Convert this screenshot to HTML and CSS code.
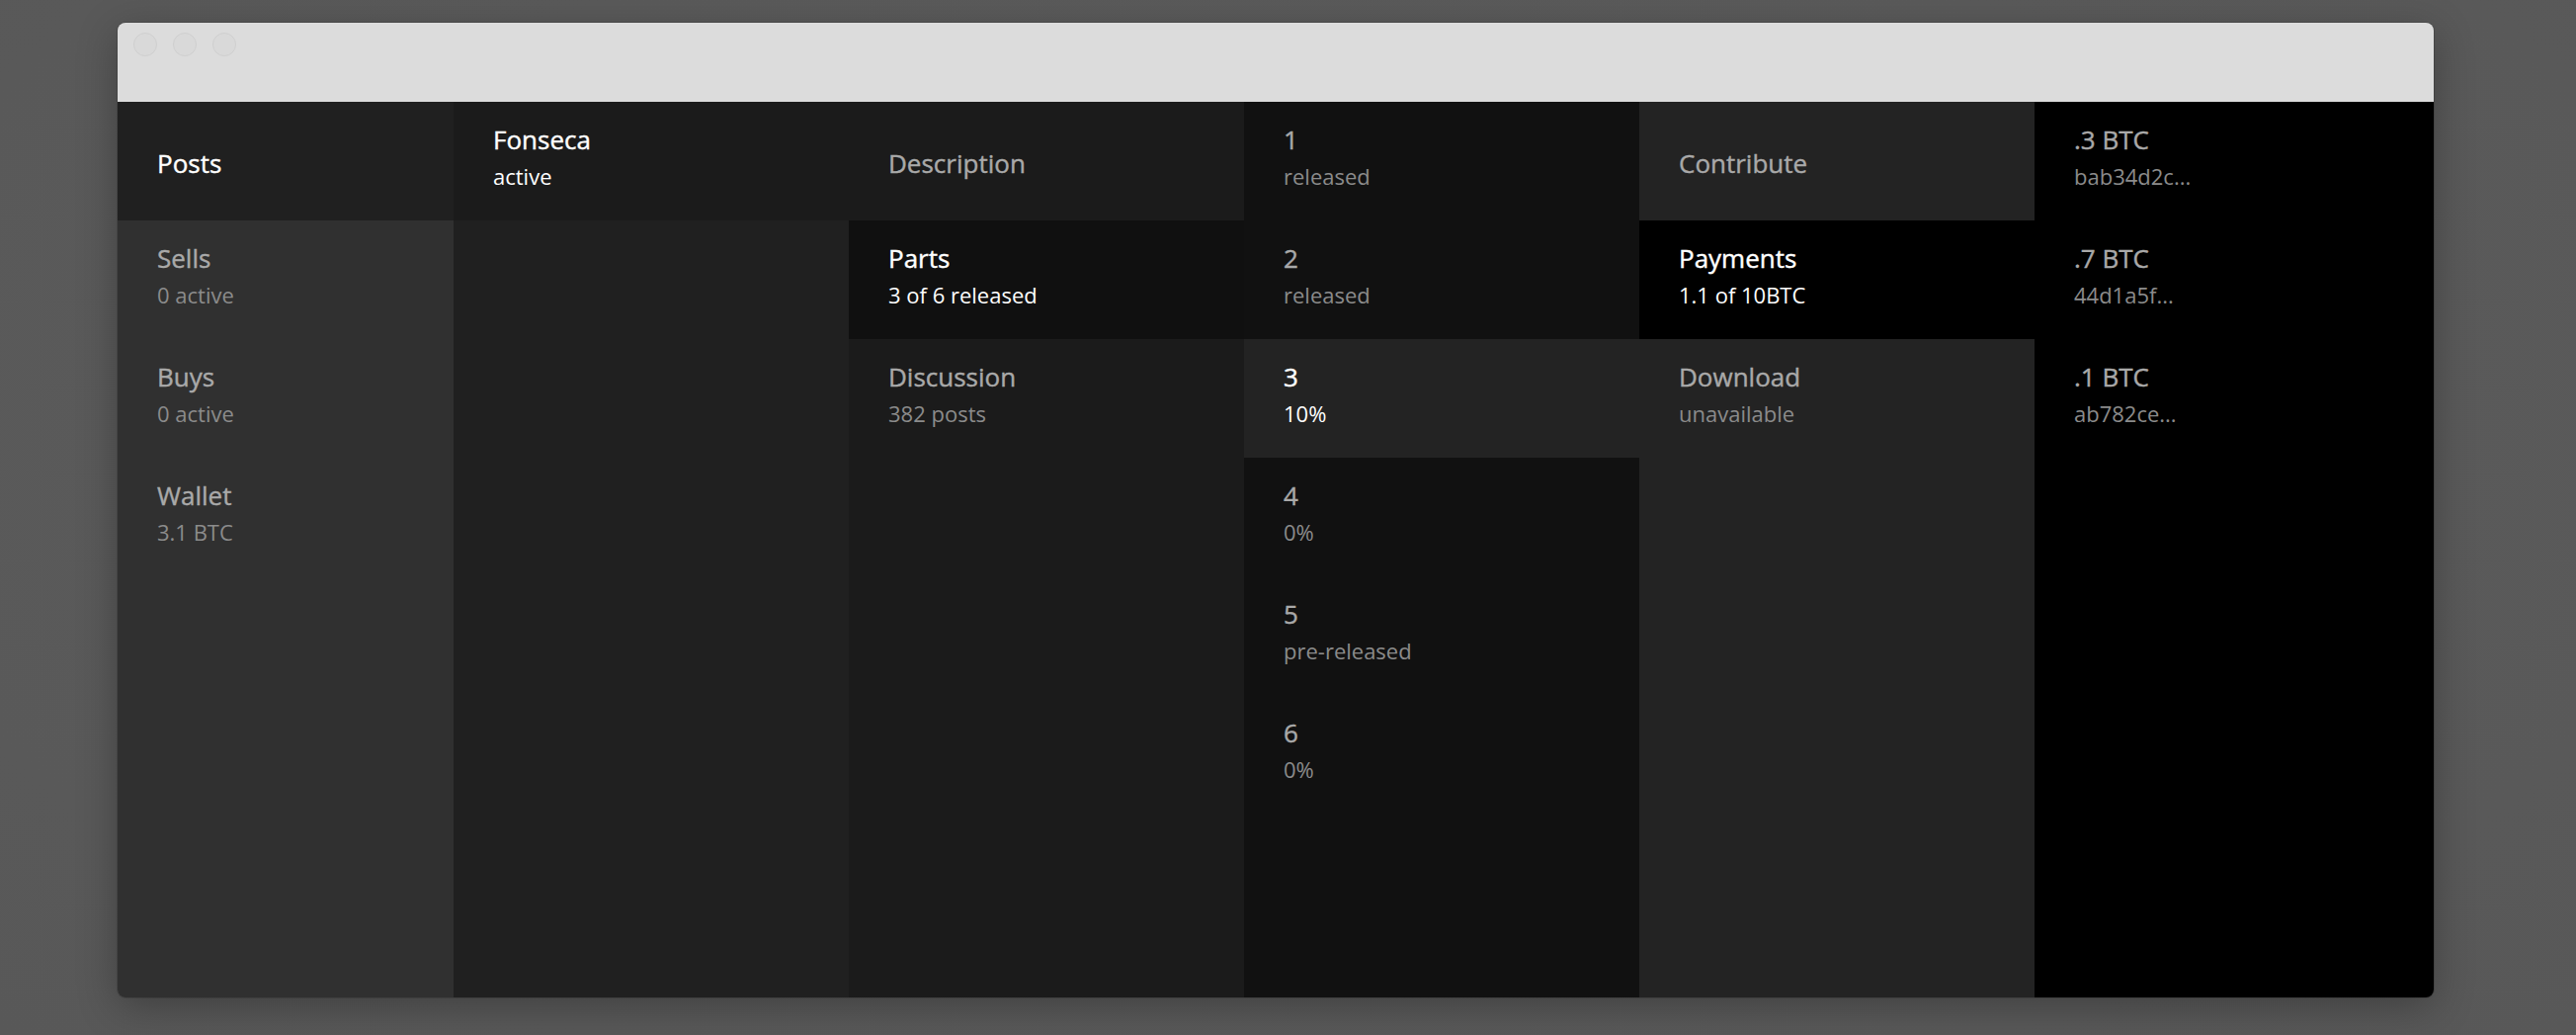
FILE: index.html
```html
<!DOCTYPE html>
<html>
<head>
<meta charset="utf-8">
<link rel="stylesheet" href="styles.css">
</head>
<body>
<div class="stage">
  <div class="window">
    <div class="titlebar">
      <span class="light"></span>
      <span class="light"></span>
      <span class="light"></span>
    </div>
    <div class="columns">
      <div class="col col1">
        <div class="item sel"><div class="t">Posts</div></div>
        <div class="item"><div class="t">Sells</div><div class="s">0 active</div></div>
        <div class="item"><div class="t">Buys</div><div class="s">0 active</div></div>
        <div class="item"><div class="t">Wallet</div><div class="s">3.1 BTC</div></div>
      </div>
      <div class="col col2">
        <div class="item sel"><div class="t">Fonseca</div><div class="s">active</div></div>
      </div>
      <div class="col col3">
        <div class="item"><div class="t">Description</div></div>
        <div class="item sel"><div class="t">Parts</div><div class="s">3 of 6 released</div></div>
        <div class="item"><div class="t">Discussion</div><div class="s">382 posts</div></div>
      </div>
      <div class="col col4">
        <div class="item"><div class="t">1</div><div class="s">released</div></div>
        <div class="item"><div class="t">2</div><div class="s">released</div></div>
        <div class="item sel"><div class="t">3</div><div class="s">10%</div></div>
        <div class="item"><div class="t">4</div><div class="s">0%</div></div>
        <div class="item"><div class="t">5</div><div class="s">pre-released</div></div>
        <div class="item"><div class="t">6</div><div class="s">0%</div></div>
      </div>
      <div class="col col5">
        <div class="item"><div class="t">Contribute</div></div>
        <div class="item sel"><div class="t">Payments</div><div class="s">1.1 of 10BTC</div></div>
        <div class="item"><div class="t">Download</div><div class="s">unavailable</div></div>
      </div>
      <div class="col col6">
        <div class="item"><div class="t">.3 BTC</div><div class="s">bab34d2c...</div></div>
        <div class="item"><div class="t">.7 BTC</div><div class="s">44d1a5f...</div></div>
        <div class="item"><div class="t">.1 BTC</div><div class="s">ab782ce...</div></div>
      </div>
    </div>
  </div>
</div>
</body>
</html>
```

FILE: styles.css
```css
html, body {
  margin: 0;
  padding: 0;
}
body {
  width: 2607px;
  height: 1047px;
  overflow: hidden;
  background: radial-gradient(ellipse at 50% 40%, #5c5c5c 0%, #5a5a5a 60%, #585858 100%);
  font-family: "Open Sans", "Noto Sans", sans-serif;
}
.stage {
  padding: 23px 0 0 119px;
}
.window {
  width: 2344px;
  height: 986px;
  border-radius: 8px;
  overflow: hidden;
  display: flex;
  flex-direction: column;
  box-shadow: 0 10px 40px rgba(0, 0, 0, 0.28), 0 0 0 1px rgba(0, 0, 0, 0.12);
}
.titlebar {
  height: 80px;
  flex: none;
  background: #dcdcdc;
  display: flex;
  align-items: flex-start;
  gap: 16px;
  padding: 10px 0 0 16px;
  box-sizing: border-box;
}
.light {
  width: 24px;
  height: 24px;
  border-radius: 50%;
  box-sizing: border-box;
  background: #d9d9d9;
  border: 1px solid #cfcfcf;
}
.columns {
  flex: 1;
  display: flex;
}
.col {
  width: 400px;
  flex: none;
  display: flex;
  flex-direction: column;
}
.col1 { width: 340px; background: #303030; }
.col2 { background: #202020; }
.col3 { background: #1b1b1b; }
.col4 { background: #111111; }
.col5 { background: #232323; }
.col6 { flex: 1; background: #000000; }

.item {
  height: 120px;
  box-sizing: border-box;
  padding: 3px 20px 0 40px;
  display: flex;
  flex-direction: column;
  justify-content: center;
}
.t {
  font-size: 26px;
  font-weight: 500;
  line-height: 30px;
  color: #a9a9a9;
  -webkit-text-stroke: 0.4px currentColor;
}
.s {
  font-size: 22px;
  font-weight: 400;
  line-height: 30px;
  margin-top: 7px;
  margin-bottom: 11px;
  color: #8b8b8b;
}
.item.sel .t, .item.sel .s { color: #ffffff; }
.col1 .sel { background: #202020; }
.col2 .sel { background: #1b1b1b; }
.col3 .sel { background: #101010; }
.col4 .sel { background: #232323; }
.col5 .sel { background: #000000; }
```
